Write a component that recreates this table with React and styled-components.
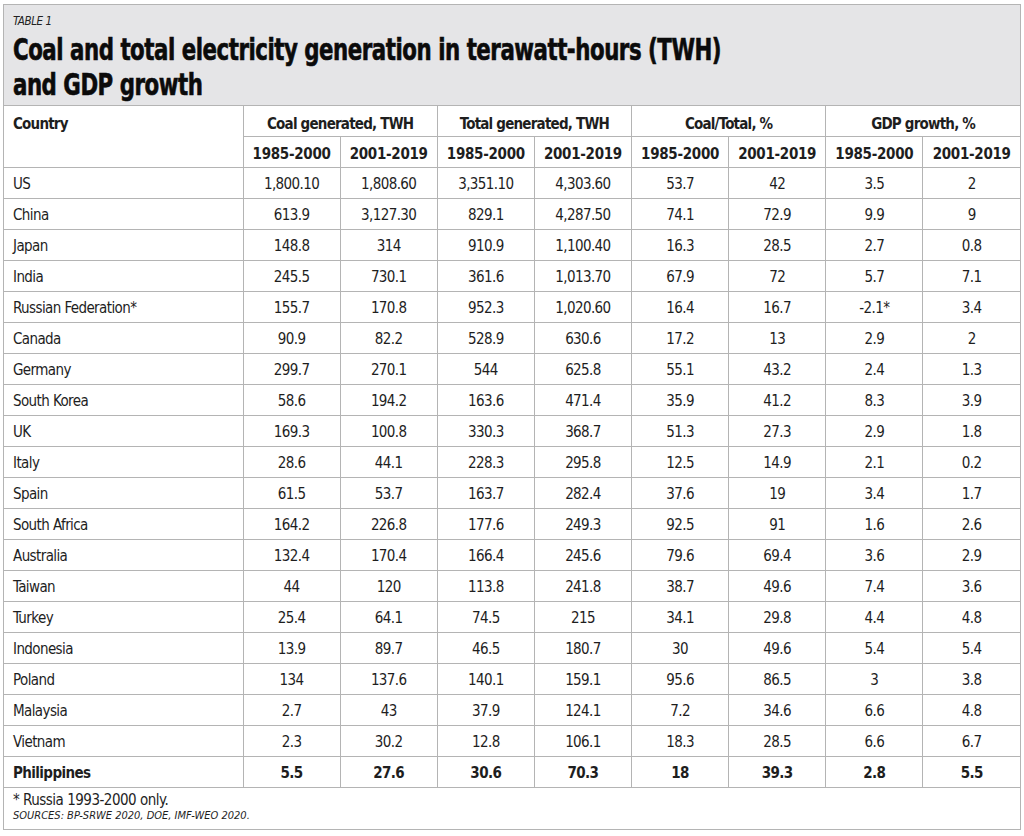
import React from "react";
import styled, { createGlobalStyle } from "styled-components";

const FONT = `"Liberation Sans Narrow", "DejaVu Sans Condensed", "Liberation Sans", Arial, sans-serif`;

const Global = createGlobalStyle`
  html, body { margin: 0; padding: 0; background: #ffffff; }
  body { font-family: ${FONT}; color: #1e1e1e; }
`;

const Frame = styled.div`
  box-sizing: border-box;
  width: 1018px;
  margin: 4px 0 0 3px;
  border: 1px solid #b4b4b4;
  background: #fff;
`;

const Header = styled.header`
  background: #e5e5e7;
  height: 101px;
  box-sizing: border-box;
  padding: 10px 0 0 9px;
  border-bottom: 1px solid #b4b4b4;
  overflow: hidden;
`;

const Kicker = styled.div`
  font-size: 11.5px;
  font-style: italic;
  letter-spacing: -0.4px;
  line-height: 13px;
  color: #222;
`;

const Title = styled.h1`
  margin: 4px 0 0;
  font-family: ${FONT};
  font-size: 30px;
  font-weight: 700;
  line-height: 35px;
  letter-spacing: -0.6px;
  color: #0b0b0b;
  -webkit-text-stroke: 0.6px #0b0b0b;
  white-space: nowrap;
  transform: scaleX(0.79);
  transform-origin: left top;
`;

const Table = styled.table`
  width: 100%;
  border-collapse: collapse;
  table-layout: fixed;
`;

const Cell = styled.td`
  height: 28px;
  padding: 2px 0 0;
  border-bottom: 1px solid #b4b4b4;
  border-right: 1px solid #b4b4b4;
  text-align: center;
  vertical-align: middle;
  font-size: 15px;
  letter-spacing: -0.6px;
  font-weight: ${(p) => (p.$bold ? 700 : 400)};
  &:last-child { border-right: none; }
`;

const NameCell = styled(Cell)`
  text-align: left;
  padding-left: 9px;
`;

const HeadCell = styled.th`
  height: ${(p) => (p.$years ? "27px" : "25px")};
  padding: ${(p) => (p.$years ? "3px" : "5px")} 0 0;
  border-bottom: 1px solid #b4b4b4;
  border-right: 1px solid #b4b4b4;
  text-align: center;
  vertical-align: middle;
  font-size: 15px;
  font-weight: 700;
  white-space: nowrap;
  letter-spacing: ${(p) => (p.$years ? "-0.3px" : "-0.8px")};
  &:last-child { border-right: none; }
`;

const CountryHead = styled(HeadCell)`
  text-align: left;
  vertical-align: top;
  padding: 9px 0 0 9px;
`;

const Footer = styled.footer`
  height: 41px;
  box-sizing: border-box;
  padding: 4px 0 0 9px;
`;

const Note = styled.div`
  font-size: 15px;
  letter-spacing: -0.5px;
  line-height: 17px;
`;

const Sources = styled.div`
  font-size: 11px;
  font-style: italic;
  line-height: 13px;
`;

const rows = [
  ["US", "1,800.10", "1,808.60", "3,351.10", "4,303.60", "53.7", "42", "3.5", "2"],
  ["China", "613.9", "3,127.30", "829.1", "4,287.50", "74.1", "72.9", "9.9", "9"],
  ["Japan", "148.8", "314", "910.9", "1,100.40", "16.3", "28.5", "2.7", "0.8"],
  ["India", "245.5", "730.1", "361.6", "1,013.70", "67.9", "72", "5.7", "7.1"],
  ["Russian Federation*", "155.7", "170.8", "952.3", "1,020.60", "16.4", "16.7", "-2.1*", "3.4"],
  ["Canada", "90.9", "82.2", "528.9", "630.6", "17.2", "13", "2.9", "2"],
  ["Germany", "299.7", "270.1", "544", "625.8", "55.1", "43.2", "2.4", "1.3"],
  ["South Korea", "58.6", "194.2", "163.6", "471.4", "35.9", "41.2", "8.3", "3.9"],
  ["UK", "169.3", "100.8", "330.3", "368.7", "51.3", "27.3", "2.9", "1.8"],
  ["Italy", "28.6", "44.1", "228.3", "295.8", "12.5", "14.9", "2.1", "0.2"],
  ["Spain", "61.5", "53.7", "163.7", "282.4", "37.6", "19", "3.4", "1.7"],
  ["South Africa", "164.2", "226.8", "177.6", "249.3", "92.5", "91", "1.6", "2.6"],
  ["Australia", "132.4", "170.4", "166.4", "245.6", "79.6", "69.4", "3.6", "2.9"],
  ["Taiwan", "44", "120", "113.8", "241.8", "38.7", "49.6", "7.4", "3.6"],
  ["Turkey", "25.4", "64.1", "74.5", "215", "34.1", "29.8", "4.4", "4.8"],
  ["Indonesia", "13.9", "89.7", "46.5", "180.7", "30", "49.6", "5.4", "5.4"],
  ["Poland", "134", "137.6", "140.1", "159.1", "95.6", "86.5", "3", "3.8"],
  ["Malaysia", "2.7", "43", "37.9", "124.1", "7.2", "34.6", "6.6", "4.8"],
  ["Vietnam", "2.3", "30.2", "12.8", "106.1", "18.3", "28.5", "6.6", "6.7"],
  ["Philippines", "5.5", "27.6", "30.6", "70.3", "18", "39.3", "2.8", "5.5"],
];

const groups = ["Coal generated, TWH", "Total generated, TWH", "Coal/Total, %", "GDP growth, %"];

export default function App() {
  return (
    <>
      <Global />
      <Frame>
        <Header>
          <Kicker>TABLE 1</Kicker>
          <Title>
            Coal and total electricity generation in terawatt-hours (TWH)
            <br />
            and GDP growth
          </Title>
        </Header>
        <Table>
          <colgroup>
            <col style={{ width: "239px" }} />
            {Array.from({ length: 8 }).map((_, i) => (
              <col key={i} />
            ))}
          </colgroup>
          <thead>
            <tr>
              <CountryHead rowSpan={2}>Country</CountryHead>
              {groups.map((g) => (
                <HeadCell key={g} colSpan={2}>
                  {g}
                </HeadCell>
              ))}
            </tr>
            <tr>
              {groups.map((g) => (
                <React.Fragment key={g}>
                  <HeadCell $years>1985-2000</HeadCell>
                  <HeadCell $years>2001-2019</HeadCell>
                </React.Fragment>
              ))}
            </tr>
          </thead>
          <tbody>
            {rows.map((r) => {
              const bold = r[0] === "Philippines";
              return (
                <tr key={r[0]}>
                  <NameCell $bold={bold}>{r[0]}</NameCell>
                  {r.slice(1).map((v, j) => (
                    <Cell key={j} $bold={bold}>
                      {v}
                    </Cell>
                  ))}
                </tr>
              );
            })}
          </tbody>
        </Table>
        <Footer>
          <Note>* Russia 1993-2000 only.</Note>
          <Sources>SOURCES: BP-SRWE 2020, DOE, IMF-WEO 2020.</Sources>
        </Footer>
      </Frame>
    </>
  );
}
